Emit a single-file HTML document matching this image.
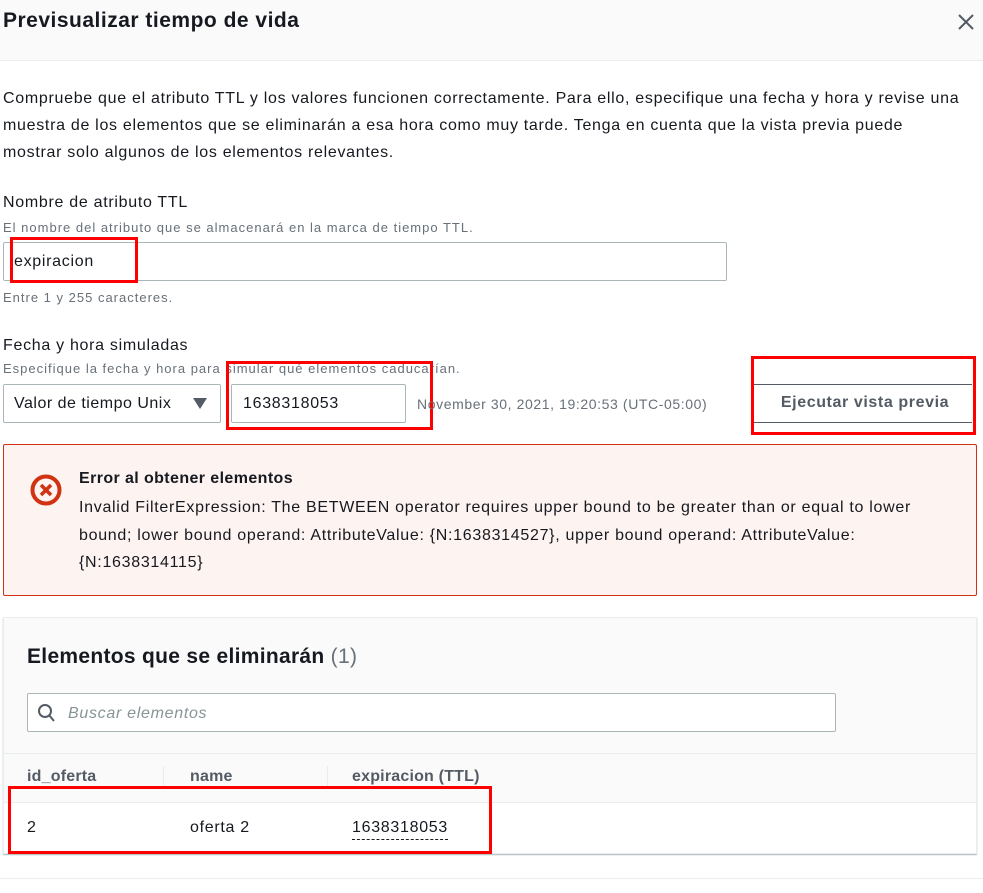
<!DOCTYPE html>
<html><head><meta charset="utf-8"><style>
*{box-sizing:border-box;margin:0;padding:0}
body{width:983px;height:893px;background:#fff;font-family:"Liberation Sans",sans-serif;color:#16191f;position:relative;overflow:hidden;letter-spacing:0.7px}
.a{position:absolute;white-space:nowrap}
.red{position:absolute;border:3px solid #f00}
.g{color:#687078;font-size:13px;letter-spacing:1px}
</style></head><body>
<div class="a" style="left:0;top:0;width:983px;height:61px;background:#fafafa;border-bottom:1px solid #eaeded"></div>
<div class="a" style="left:3px;top:9px;font-size:21px;font-weight:bold;letter-spacing:0.5px">Previsualizar tiempo de vida</div>
<svg class="a" style="left:958px;top:14px" width="16" height="16" viewBox="0 0 16 16"><path d="M1 1L15 15M15 1L1 15" stroke="#545b64" stroke-width="2"/></svg>
<div class="a" style="left:3px;top:85px;font-size:16px;line-height:27px">Compruebe que el atributo TTL y los valores funcionen correctamente. Para ello, especifique una fecha y hora y revise una<br>muestra de los elementos que se eliminarán a esa hora como muy tarde. Tenga en cuenta que la vista previa puede<br>mostrar solo algunos de los elementos relevantes.</div>
<div class="a" style="left:3px;top:194px;font-size:16px">Nombre de atributo TTL</div>
<div class="a g" style="left:3px;top:220px">El nombre del atributo que se almacenará en la marca de tiempo TTL.</div>
<div class="a" style="left:3px;top:242px;width:724px;height:39px;border:1px solid #aab7b8;border-radius:2px"></div>
<div class="a" style="left:14px;top:253px;font-size:16px">expiracion</div>
<div class="red" style="left:10px;top:237px;width:128px;height:46px"></div>
<div class="a g" style="left:3px;top:290px">Entre 1 y 255 caracteres.</div>
<div class="a" style="left:3px;top:337px;font-size:16px">Fecha y hora simuladas</div>
<div class="a g" style="left:3px;top:361px">Especifique la fecha y hora para simular qué elementos caducarían.</div>
<div class="a" style="left:3px;top:384px;width:218px;height:39px;border:1px solid #aab7b8;border-radius:2px"></div>
<div class="a" style="left:14px;top:395px;font-size:16px;letter-spacing:0.5px">Valor de tiempo Unix</div>
<svg class="a" style="left:193px;top:398px" width="14" height="12"><path d="M0 0H14L7 11Z" fill="#545b64"/></svg>
<div class="a" style="left:231px;top:384px;width:175px;height:39px;border:1px solid #aab7b8;border-radius:2px"></div>
<div class="a" style="left:243px;top:395px;font-size:16px">1638318053</div>
<div class="red" style="left:226px;top:361px;width:207px;height:69px"></div>
<div class="a" style="left:417px;top:396px;font-size:14px;color:#687078;letter-spacing:0.6px">November 30, 2021, 19:20:53 (UTC-05:00)</div>
<div class="a" style="left:754px;top:384px;width:218px;height:39px;border-top:1px solid #545b64;border-bottom:1px solid #545b64"></div>
<div class="a" style="left:752px;top:394px;width:226px;text-align:center;font-size:16px;font-weight:bold;color:#545b64;letter-spacing:0.6px">Ejecutar vista previa</div>
<div class="red" style="left:751px;top:356px;width:225px;height:79px"></div>
<div class="a" style="left:3px;top:444px;width:974px;height:152px;background:#fdf3f1;border:1px solid #d13212;border-radius:2px"></div>
<svg class="a" style="left:30px;top:474px" width="32" height="32"><circle cx="16" cy="16" r="13.5" fill="none" stroke="#d13212" stroke-width="4"/><path d="M11 11L21 21M21 11L11 21" stroke="#d13212" stroke-width="3.5"/></svg>
<div class="a" style="left:79px;top:470px;font-size:16px;font-weight:bold;letter-spacing:0.4px">Error al obtener elementos</div>
<div class="a" style="left:79px;top:494px;font-size:16px;line-height:27.5px">Invalid FilterExpression: The BETWEEN operator requires upper bound to be greater than or equal to lower<br>bound; lower bound operand: AttributeValue: {N:1638314527}, upper bound operand: AttributeValue:<br>{N:1638314115}</div>
<div class="a" style="left:3px;top:617px;width:974px;height:237px;background:#fafafa;border:1px solid #eaeded;box-shadow:0 1px 1px #aab7b8"></div>
<div class="a" style="left:27px;top:645px;font-size:21px;font-weight:bold;letter-spacing:0.3px">Elementos que se eliminarán <span style="font-weight:normal;color:#687078">(1)</span></div>
<div class="a" style="left:27px;top:693px;width:809px;height:39px;background:#fff;border:1px solid #aab7b8;border-radius:2px"></div>
<svg class="a" style="left:37px;top:703px" width="20" height="20"><circle cx="8" cy="8" r="6" fill="none" stroke="#545b64" stroke-width="2"/><path d="M12 12L17 18" stroke="#545b64" stroke-width="2"/></svg>
<div class="a" style="left:68px;top:705px;font-size:16px;font-style:italic;color:#879596">Buscar elementos</div>
<div class="a" style="left:4px;top:753px;width:972px;height:1px;background:#eaeded"></div>
<div class="a" style="left:163px;top:766px;width:1px;height:22px;background:#eaeded"></div>
<div class="a" style="left:327px;top:766px;width:1px;height:22px;background:#eaeded"></div>
<div class="a" style="left:27px;top:768px;font-size:16px;font-weight:bold;color:#545b64;letter-spacing:0.2px">id_oferta</div>
<div class="a" style="left:190px;top:768px;font-size:16px;font-weight:bold;color:#545b64;letter-spacing:0.2px">name</div>
<div class="a" style="left:352px;top:768px;font-size:16px;font-weight:bold;color:#545b64;letter-spacing:0.2px">expiracion (TTL)</div>
<div class="a" style="left:4px;top:802px;width:972px;height:51px;background:#fff;border-top:1px solid #eaeded"></div>
<div class="a" style="left:27px;top:819px;font-size:16px">2</div>
<div class="a" style="left:190px;top:819px;font-size:16px">oferta 2</div>
<div class="a" style="left:352px;top:819px;font-size:16px;border-bottom:1px dashed #16191f;padding-bottom:2px">1638318053</div>
<div class="red" style="left:8px;top:786px;width:484px;height:68px"></div>
<div class="a" style="left:0;top:878px;width:983px;height:1px;background:#eaeded"></div>
</body></html>
